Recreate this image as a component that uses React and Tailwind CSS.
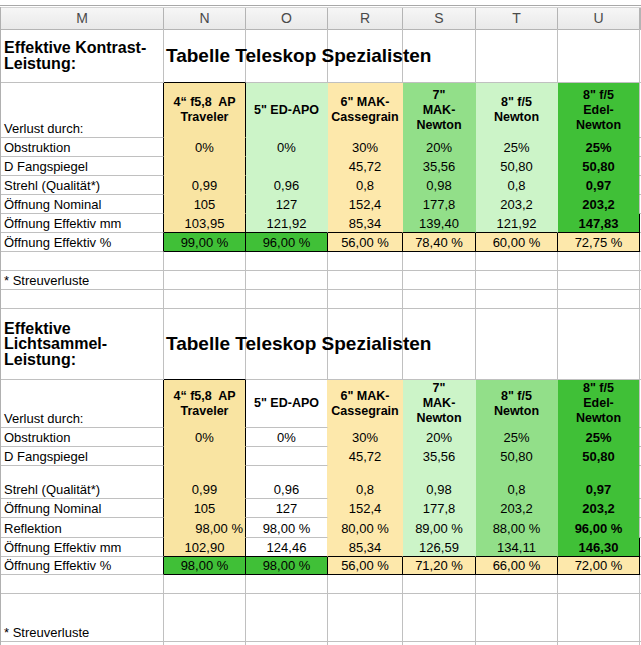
const GRID = "grid grid-cols-[163px_82px_82px_75px_73px_82px_82px_1fr]";

// gridline / border colours
const GR = "border-r-[#c0c0c0]";
const GB = "border-b-[#c0c0c0]";
const TR = "border-r-transparent";
const TB = "border-b-transparent";
const KR = "border-r-black";
const KB = "border-b-black";
const YR = "border-r-[#fde8ab]";

// cell fills
const Y = "bg-[#f9e4a2]";
const Y2 = "bg-[#fde8ab]";
const LG = "bg-[#ccf4c8]";
const MG = "bg-[#92df89]";
const BG = "bg-[#40c037]";

const T1 = {
  fill: [Y, LG, Y2, MG, LG, BG],
  right: [KR, TR, TR, TR, TR, GR],
  bottom: [TB, TB, TB, TB, TB, TB],
};
const T2 = {
  fill: [Y, "", Y2, LG, MG, BG],
  right: [KR, YR, TR, TR, TR, GR],
  bottom: [TB, GB, TB, TB, TB, TB],
};

function Cell({ c = "", children }) {
  return <div className={`flex min-w-0 whitespace-nowrap border-r border-b ${c}`}>{children}</div>;
}

function Row({ h, cells }) {
  return (
    <div className={`${GRID} ${h} text-[13px] leading-[16px]`}>
      {cells.map((cell, i) => (
        <Cell key={i} c={cell.c}>
          {cell.t}
        </Cell>
      ))}
      <div className={`border-b ${GB}`} />
    </div>
  );
}

function dataRow(tb, label, vals, opts = {}) {
  const { last = false, rightN = false } = opts;
  return [
    { t: label, c: `items-end justify-start pl-[3px] ${KR} ${GB}` },
    ...vals.map((v, i) => ({
      t: v,
      c: [
        "items-end",
        i === 0 && rightN ? "justify-end pr-[2px]" : "justify-center",
        tb.fill[i],
        last ? KB : tb.bottom[i],
        i === 5 && last ? KR : tb.right[i],
        i === 5 ? "font-bold" : "",
      ].join(" "),
    })),
  ];
}

function pctRow(vals) {
  const fills = [BG, BG, Y2, Y2, Y2, Y2];
  return [
    { t: "Öffnung Effektiv %", c: `items-end pl-[3px] ${KR} ${GB}` },
    ...vals.map((v, i) => ({ t: v, c: `items-end justify-center ${fills[i]} ${KR} ${KB}` })),
  ];
}

function blankRow(label = "") {
  return [
    { t: label, c: `items-end pl-[3px] ${GR} ${GB}` },
    ...[0, 1, 2, 3, 4, 5].map(() => ({ t: "", c: `${GR} ${GB}` })),
  ];
}

function titleRow(lines) {
  return [
    {
      t: (
        <div className="text-[16px] font-bold leading-[15.5px]">
          {lines.map((l) => (
            <div key={l}>{l}</div>
          ))}
        </div>
      ),
      c: `items-center pl-[3px] ${GR} ${GB}`,
    },
    {
      t: <span className="relative z-10 text-[19px] font-bold">Tabelle Teleskop Spezialisten</span>,
      c: `items-center pl-[2px] overflow-visible ${GR} ${KB}`,
    },
    ...[0, 1, 2, 3, 4].map(() => ({ t: "", c: `${GR} ${GB}` })),
  ];
}

const HEADS = [
  ["4“ f5,8\u00a0 AP", "Traveler"],
  ['5" ED-APO'],
  ['6" MAK-', "Cassegrain"],
  ['7"', "MAK-", "Newton"],
  ['8" f/5', "Newton"],
  ['8" f/5', "Edel-", "Newton"],
];

function headRow(tb) {
  return [
    { t: "Verlust durch:", c: `items-end pl-[3px] ${KR} ${GB}` },
    ...HEADS.map((lines, i) => ({
      t: (
        <div className="text-center text-[12.5px] font-bold leading-[15px]">
          {lines.map((l) => (
            <div key={l}>{l}</div>
          ))}
        </div>
      ),
      c: `items-center justify-center ${tb.fill[i]} ${tb.right[i]} ${tb.bottom[i]}`,
    })),
  ];
}

const LETTERS = ["M", "N", "O", "R", "S", "T", "U", ""];

export default function App() {
  return (
    <div className="h-[645px] w-[641px] overflow-hidden bg-white font-['Liberation_Sans',Arial,sans-serif] text-black">
      <div className="h-[5px]" />
      <div className="h-[2px] border-t border-t-[#a8a8a8]" />
      <div className="border-l border-l-[#b0b0b0]">
        <div className={`${GRID} h-[22px] border-t border-t-[#d4d4d4] bg-gradient-to-b from-[#f6f6f6] to-[#e9e9e9]`}>
          {LETTERS.map((l, i) => (
            <div
              key={i}
              className="flex items-center justify-center border-r border-b border-[#b4b4b4] text-[14px] text-[#4a4a4a]"
            >
              {l}
            </div>
          ))}
        </div>

        {/* Kontrast-Leistung */}
        <Row h="h-[54px]" cells={titleRow(["Effektive Kontrast-", "Leistung:"])} />
        <Row h="h-[55px]" cells={headRow(T1)} />
        <Row h="h-[19px]" cells={dataRow(T1, "Obstruktion", ["0%", "0%", "30%", "20%", "25%", "25%"])} />
        <Row h="h-[19px]" cells={dataRow(T1, "D Fangspiegel", ["", "", "45,72", "35,56", "50,80", "50,80"])} />
        <Row h="h-[19px]" cells={dataRow(T1, "Strehl (Qualität*)", ["0,99", "0,96", "0,8", "0,98", "0,8", "0,97"])} />
        <Row h="h-[19px]" cells={dataRow(T1, "Öffnung Nominal", ["105", "127", "152,4", "177,8", "203,2", "203,2"])} />
        <Row
          h="h-[19px]"
          cells={dataRow(T1, "Öffnung Effektiv mm", ["103,95", "121,92", "85,34", "139,40", "121,92", "147,83"], { last: true })}
        />
        <Row h="h-[19px]" cells={pctRow(["99,00 %", "96,00 %", "56,00 %", "78,40 %", "60,00 %", "72,75 %"])} />
        <Row h="h-[19px]" cells={blankRow()} />
        <Row h="h-[19px]" cells={blankRow("* Streuverluste")} />
        <Row h="h-[19px]" cells={blankRow()} />

        {/* Lichtsammel-Leistung */}
        <Row h="h-[71px]" cells={titleRow(["Effektive", "Lichtsammel-", "Leistung:"])} />
        <Row h="h-[48px]" cells={headRow(T2)} />
        <Row h="h-[19px]" cells={dataRow(T2, "Obstruktion", ["0%", "0%", "30%", "20%", "25%", "25%"])} />
        <Row h="h-[19px]" cells={dataRow(T2, "D Fangspiegel", ["", "", "45,72", "35,56", "50,80", "50,80"])} />
        <Row h="h-[33px]" cells={dataRow(T2, "Strehl (Qualität*)", ["0,99", "0,96", "0,8", "0,98", "0,8", "0,97"])} />
        <Row h="h-[19px]" cells={dataRow(T2, "Öffnung Nominal", ["105", "127", "152,4", "177,8", "203,2", "203,2"])} />
        <Row
          h="h-[20px]"
          cells={dataRow(T2, "Reflektion", ["98,00 %", "98,00 %", "80,00 %", "89,00 %", "88,00 %", "96,00 %"], { rightN: true })}
        />
        <Row
          h="h-[19px]"
          cells={dataRow(T2, "Öffnung Effektiv mm", ["102,90", "124,46", "85,34", "126,59", "134,11", "146,30"], { last: true })}
        />
        <Row h="h-[18px]" cells={pctRow(["98,00 %", "98,00 %", "56,00 %", "71,20 %", "66,00 %", "72,00 %"])} />
        <Row h="h-[19px]" cells={blankRow()} />
        <Row h="h-[48px]" cells={blankRow("* Streuverluste")} />
        <Row h="h-[19px]" cells={blankRow()} />
      </div>
    </div>
  );
}
